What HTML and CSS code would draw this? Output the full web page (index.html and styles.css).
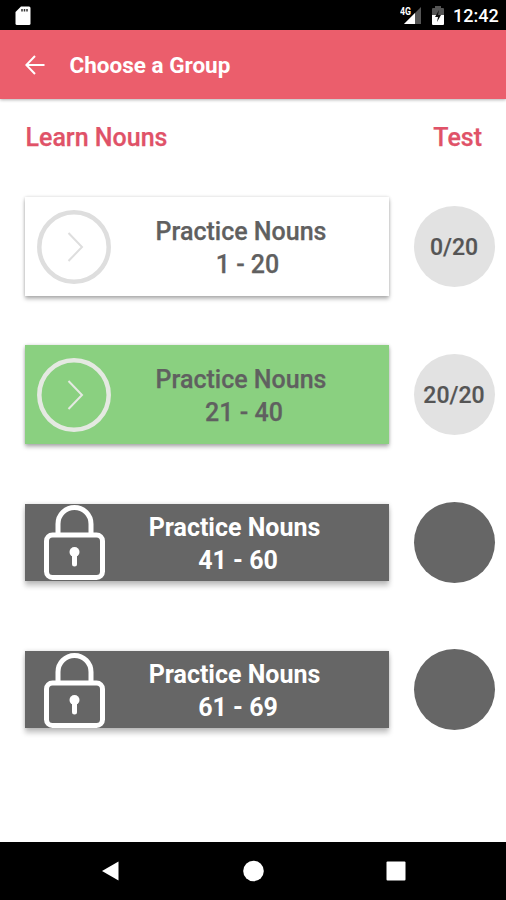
FILE: index.html
```
<!DOCTYPE html>
<html lang="en">
<head>
<meta charset="utf-8">
<title>Choose a Group</title>
<link rel="stylesheet" href="styles.css">
</head>
<body>
<div class="status">
  <svg class="sd" width="16" height="20" viewBox="0 0 16 20"><path d="M6 .5h8q1.500 0 1.500 1.500v15.500q0 1.500-1.500 1.500H2q-1.500 0-1.500-1.500V6z" fill="#fff"/><path d="M7 3v2.500M9.500 3v2.500M12 3v2.500" stroke="#333" stroke-width="1.500"/></svg>
  <svg class="signal" width="22" height="20" viewBox="0 0 22 20"><path d="M21 1v17H4z" fill="#555"/><path d="M15 7v11H4z" fill="#fff"/><text x="0" y="8.500" textLength="11" lengthAdjust="spacingAndGlyphs">4G</text></svg>
  <svg class="battery" width="12" height="20" viewBox="0 0 12 20"><path d="M3 2V0h6v2h2q1 0 1 1v6H0V3q0-1 1-1z" fill="#555"/><path d="M0 9h12v9q0 1-1 1H1q-1 0-1-1z" fill="#fff"/><path d="M7 4 3 11h3l-1 5 4-7H6z" fill="#111"/></svg>
  <span class="time">12:42</span>
</div>
<header class="appbar">
  <svg width="20" height="20" viewBox="0 0 20 20"><path d="M19.500 10H1.500M10 1 1.300 10 10 19" fill="none" stroke="#fff" stroke-width="2"/></svg>
  <h1>Choose a Group</h1>
</header>
<main>
  <div class="heads"><h2>Learn Nouns</h2><h2>Test</h2></div>
  <div class="group">
    <div class="card open">
      <svg width="74" height="74" viewBox="0 0 74 74"><circle cx="37" cy="37" r="34.700"/><path class="chev" d="M31.500 23 45 37 31.500 51"/></svg>
      <p>Practice Nouns<span class="range first">1 - 20</span></p>
    </div>
    <div class="score">0/20</div>
  </div>
  <div class="group">
    <div class="card open done">
      <svg width="74" height="74" viewBox="0 0 74 74"><circle cx="37" cy="37" r="34.700"/><path class="chev" d="M31.500 23 45 37 31.500 51"/></svg>
      <p>Practice Nouns<span class="range">21 - 40</span></p>
    </div>
    <div class="score">20/20</div>
  </div>
  <div class="group">
    <div class="card locked">
      <svg width="62" height="76" viewBox="0 0 62 76"><path d="M14 31V20a16.500 16.500 0 0 1 33 0v11"/><rect x="2.500" y="31" width="56" height="42.500" rx="6"/><circle class="key" cx="30.500" cy="48" r="5"/><path class="slot" d="M30.500 49v11"/></svg>
      <p>Practice Nouns<span class="range">41 - 60</span></p>
    </div>
    <div class="score off"></div>
  </div>
  <div class="group">
    <div class="card locked">
      <svg width="62" height="76" viewBox="0 0 62 76"><path d="M14 31V20a16.500 16.500 0 0 1 33 0v11"/><rect x="2.500" y="31" width="56" height="42.500" rx="6"/><circle class="key" cx="30.500" cy="48" r="5"/><path class="slot" d="M30.500 49v11"/></svg>
      <p>Practice Nouns<span class="range">61 - 69</span></p>
    </div>
    <div class="score off"></div>
  </div>
</main>
<nav>
  <svg width="19" height="22" viewBox="0 0 19 22"><path d="M17.500 1.500v19L1 11z"/></svg>
  <svg width="22" height="22" viewBox="0 0 22 22"><circle cx="11.500" cy="11" r="10.300"/></svg>
  <svg width="20" height="20" viewBox="0 0 20 20"><rect x=".5" y=".5" width="19" height="19" rx="1"/></svg>
</nav>
</body>
</html>
```
FILE: styles.css
```
* { box-sizing: border-box; }
body { margin: 0; width: 506px; height: 900px; display: flex; flex-direction: column; overflow: hidden; background: #fff; font-family: Roboto, sans-serif; font-weight: 500; }
h1, h2, p { margin: 0; }
svg { display: block; flex: none; }
.status { height: 30px; background: #000; display: flex; align-items: center; padding: 1px 9px 0 15px; color: #fff; }
.signal { margin-left: auto; }
.signal text { font-size: 10px; font-weight: 700; fill: #fff; }
.battery { margin-left: 10px; }
.time { width: 44px; margin-left: 9px; font-size: 18px; line-height: 30px; white-space: nowrap; }
.appbar { height: 69px; background: #eb5e6c; display: flex; align-items: center; padding: 1px 0 0 25px; box-shadow: 0 1px 3px rgba(0,0,0,.3); }
h1 { margin-left: 24.500px; font-size: 22.500px; line-height: 30px; font-weight: 700; color: #fff; }
main { flex: 1; }
.heads { height: 74px; padding: 22px 24px 0 25.500px; display: flex; justify-content: space-between; }
h2 { font-size: 25px; line-height: 33px; font-weight: 500; color: #e05268; -webkit-text-stroke: .25px #e05268; }
.group { height: 147.700px; padding: 0 11.500px 0 25px; display: flex; align-items: center; justify-content: space-between; }
.card { width: 364px; height: 99px; background: #fff; display: flex; align-items: center; color: #606060; font-size: 25px; line-height: 33px; font-weight: 500; text-align: center; box-shadow: 0 3px 4px rgba(0,0,0,.28), 0 0 3px rgba(0,0,0,.16); }
.open p { -webkit-text-stroke: .25px #606060; }
.card svg { margin-left: 12px; fill: none; stroke: #dedede; stroke-width: 4.500; }
.card .chev { stroke-width: 2; }
.card p { width: 260px; padding-top: 2px; }
.range { display: block; padding-left: 6px; }
.range.first { padding-left: 13px; }
.done { background: #8ad080; }
.done svg { stroke: #e5e9e2; }
.locked { height: 77px; background: #666; color: #fff; font-weight: 700; box-shadow: 0 5px 5px rgba(0,0,0,.22), 0 0 4px rgba(0,0,0,.16); }
.locked svg { margin-left: 19px; stroke: #fff; stroke-width: 5; }
.locked .key { fill: #fff; stroke: none; }
.locked .slot { stroke-linecap: round; }
.locked p { width: 257px; padding-top: 3px; }
.locked .range { padding-left: 7px; }
.score { width: 81px; height: 81px; border-radius: 50%; background: #e2e2e2; color: #555; font-size: 23px; font-weight: 500; padding-top: 1px; display: flex; align-items: center; justify-content: center; -webkit-text-stroke: .2px #555; }
.off { background: #666; }
nav { height: 58px; background: #000; display: flex; align-items: center; justify-content: space-between; padding: 0 100px 0 101px; fill: #fff; }
```
